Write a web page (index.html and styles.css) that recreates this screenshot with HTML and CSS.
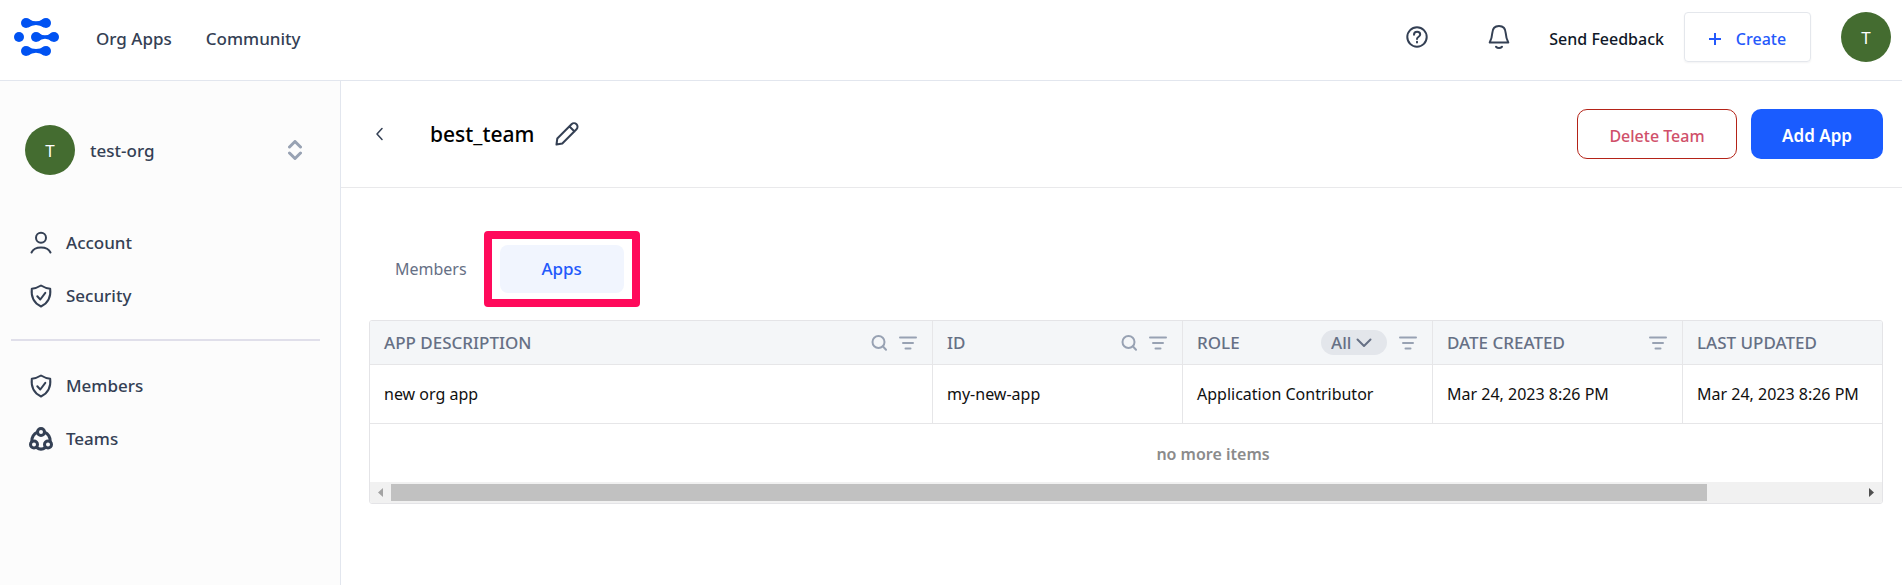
FILE: index.html
```html
<!DOCTYPE html>
<html lang="en">
<head>
<meta charset="utf-8">
<title>best_team - Apps</title>
<link rel="stylesheet" href="styles.css">
</head>
<body>
<svg class="defs" aria-hidden="true">
  <symbol id="shield" viewBox="0 0 24 24"><path d="M12 1.5c3 1.9 6 2.9 9.2 3.2.9 8.2-1.6 14.200-9.2 17.800C4.400 18.900 1.900 12.900 2.800 4.700 6 4.400 9 3.400 12 1.500z"/><path d="M8.300 12.300l3 3.200 5-6.700"/></symbol>
  <symbol id="search" viewBox="0 0 16 16"><circle cx="7.500" cy="7" r="6"/><path d="M11.800 11.300l3.200 3.400"/></symbol>
  <symbol id="filter" viewBox="0 0 18 14"><path d="M1 1.500h16M4 7h10M6.500 12.500h5"/></symbol>
</svg>
<div class="page">
  <header class="topbar">
    <a class="logo" href="#" aria-label="Home">
      <svg width="46" height="40" viewBox="0 0 46 40">
        <circle cx="12" cy="6" r="5"/><circle cx="32" cy="6" r="5"/><path d="M14 1.400Q22 7 30 1.400V10.600Q22 5.500 14 10.600z"/>
        <circle cx="5" cy="20" r="5"/><circle cx="22" cy="20" r="5"/><circle cx="40" cy="20" r="5"/><path d="M24 15.400Q31 21 38 15.400V24.600Q31 19 24 24.600z"/>
        <circle cx="12" cy="34" r="5"/><circle cx="32" cy="34" r="5"/><path d="M14 29.400Q22 34.500 30 29.400V38.600Q22 33 14 38.600z"/>
      </svg>
    </a>
    <nav class="topnav"><a href="#">Org Apps</a><a href="#">Community</a></nav>
    <div class="actions">
      <button class="icon-btn" aria-label="Help"><svg class="line" width="24" height="24" viewBox="0 0 24 24"><circle cx="12" cy="12" r="9.700"/><path d="M9 9.700c0-4 6.200-3.700 6.200-.3 0 2.300-3.200 2.300-3.200 4.600M12 16.800v.8"/></svg></button>
      <button class="icon-btn" aria-label="Notifications"><svg class="line" width="24" height="26" viewBox="0 0 24 26"><path d="M12 2C7.500 2 5.500 5 5.300 9 5 13 4.500 15 2.700 18.500h18.600C19.500 15 19 13 18.700 9 18.500 5 16.500 2 12 2z"/><path d="M9 22.800c1.600 1.700 4.400 1.700 6 0"/></svg></button>
      <a class="feedback" href="#">Send Feedback</a>
      <button class="btn create"><svg width="12" height="12" viewBox="0 0 12 12"><path d="M6 0v12M0 6h12"/></svg>Create</button>
      <button class="avatar" aria-label="Profile">T</button>
    </div>
  </header>
  <aside class="sidebar">
    <button class="org"><span class="avatar">T</span><span class="org-name">test-org</span>
      <svg class="updown" width="14" height="20" viewBox="0 0 14 20"><path d="M1.500 7L7 1.500 12.500 7M1.500 13L7 18.500 12.500 13"/></svg></button>
    <nav class="menu">
      <a href="#"><svg class="line" width="24" height="24" viewBox="0 0 24 24"><circle cx="12" cy="6.800" r="5"/><path d="M2.500 21.500c3-6.700 16-6.700 19 0"/></svg>Account</a>
      <a href="#"><svg class="line" width="24" height="24"><use href="#shield"/></svg>Security</a>
    </nav>
    <hr>
    <nav class="menu">
      <a href="#"><svg class="line" width="24" height="24"><use href="#shield"/></svg>Members</a>
      <a href="#"><svg class="line teams" width="24" height="24" viewBox="0 0 24 24"><circle cx="12" cy="5" r="3.500"/><circle cx="5" cy="17.500" r="3.500"/><circle cx="19" cy="17.500" r="3.500"/><path d="M8.500 5.200C4.800 7 2.800 10 2.800 14.300M15.500 5.200c3.700 1.800 5.700 4.800 5.700 9.100M7.500 20.500c2.800 2 6.200 2 9 0"/></svg>Teams</a>
    </nav>
  </aside>
  <main class="main">
    <div class="titlebar">
      <button class="back" aria-label="Back"><svg width="8" height="14" viewBox="0 0 8 14"><path d="M7 1.500L2 7l5 5.500"/></svg></button>
      <h1>best_team</h1>
      <button class="edit" aria-label="Edit name"><svg class="line" width="24" height="24" viewBox="0 0 24 24"><path d="M1.500 22.500l.8-6L16.500 2.300a3.500 3.500 0 0 1 5 5L7.300 21.500zM14.500 4.500l5 5"/></svg></button>
      <button class="btn delete">Delete Team</button>
      <button class="btn add">Add App</button>
    </div>
    <div class="content">
      <div class="tabs" role="tablist">
        <button class="tab" role="tab" aria-selected="false">Members</button>
        <div class="highlight"><button class="tab active" role="tab" aria-selected="true">Apps</button></div>
      </div>
      <div class="grid">
        <table>
          <colgroup><col><col class="mid"><col class="mid"><col class="mid"><col class="last"></colgroup>
          <thead><tr>
            <th><div class="head"><span>APP DESCRIPTION</span><svg class="tool" width="16" height="16"><use href="#search"/></svg><svg class="tool bars" width="18" height="14"><use href="#filter"/></svg></div></th>
            <th><div class="head"><span>ID</span><svg class="tool" width="16" height="16"><use href="#search"/></svg><svg class="tool bars" width="18" height="14"><use href="#filter"/></svg></div></th>
            <th><div class="head"><label for="role">ROLE</label><div class="pick"><select id="role"><option>All</option></select><svg width="16" height="10" viewBox="0 0 16 10"><path d="M1.500 1.500L8 8l6.500-6.500"/></svg></div><svg class="tool bars" width="18" height="14"><use href="#filter"/></svg></div></th>
            <th><div class="head"><span>DATE CREATED</span><svg class="tool bars" width="18" height="14"><use href="#filter"/></svg></div></th>
            <th><div class="head"><span>LAST UPDATED</span></div></th>
          </tr></thead>
          <tbody>
            <tr><td>new org app</td><td>my-new-app</td><td>Application Contributor</td><td>Mar 24, 2023 8:26 PM</td><td>Mar 24, 2023 8:26 PM</td></tr>
          </tbody>
        </table>
        <p class="end">no more items</p>
        <div class="scroll">
          <svg class="dim" width="21" height="17" viewBox="0 0 21 17"><path d="M13 4v9L8 8.500z"/></svg>
          <div class="track"><div class="thumb"></div></div>
          <svg width="21" height="17" viewBox="0 0 21 17"><path d="M8 4v9l5-4.500z"/></svg>
        </div>
      </div>
    </div>
  </main>
</div>
</body>
</html>
```

FILE: styles.css
```css
* { box-sizing: border-box; }
body { margin: 0; font: 500 16px/24px "Noto Sans", "Open Sans", sans-serif; color: #344054; background: #fff; }
button { font: inherit; color: inherit; background: none; border: 0; padding: 0; cursor: pointer; }
a { color: inherit; text-decoration: none; }
svg { display: block; flex: none; fill: none; stroke-linecap: round; stroke-linejoin: round; }
.defs { position: absolute; width: 0; height: 0; }
.line { stroke: #344054; stroke-width: 2; }
.teams { stroke-width: 3; }

.page { display: grid; grid-template: auto 1fr / 341px minmax(0, 1fr); min-height: 100vh; }
.topbar { grid-column: 1 / -1; display: flex; align-items: center; padding: 12px 11px 18px 14px; border-bottom: 1px solid #e2e6ee; }
.logo svg { fill: #0052f2; }
.topnav { display: flex; gap: 34px; margin-left: 36px; padding-top: 3px; font-size: 17px; }
.actions { display: flex; align-items: center; margin-left: auto; }
.icon-btn { width: 24px; margin-right: 58px; }
.icon-btn + .feedback { margin-left: -20px; }
.feedback { color: #101828; padding-top: 3px; margin-right: 20px; }
.avatar { display: grid; place-items: center; width: 50px; height: 50px; border-radius: 50%; background: #446c30; color: #fff; font-weight: 400; font-size: 17px; padding-top: 2px; flex: none; }
.btn { display: flex; align-items: center; justify-content: center; height: 50px; padding-top: 3px; border-radius: 10px; }
.create { width: 127px; gap: 15px; margin-right: 30px; border: 1px solid #e4e7ec; border-radius: 4px; color: #2459fb; box-shadow: 0 1px 2px rgba(16, 24, 40, .05); }
.create svg { stroke: #2459fb; stroke-width: 2; stroke-linecap: butt; }

.sidebar { background: #fcfcfc; border-right: 1px solid #e2e6ee; padding: 44px 20px 0 11px; font-size: 17px; }
.org { display: flex; align-items: center; width: 100%; padding: 0 18px 0 14px; }
.org-name { margin-left: 15px; padding-top: 2px; }
.updown { margin-left: auto; stroke: #98a2b3; stroke-width: 3; }
.menu { display: flex; flex-direction: column; gap: 29px; padding-left: 18px; }
.org + .menu { padding-top: 56px; }
.menu a { display: flex; align-items: center; gap: 13px; }
hr { height: 2px; margin: 31px 0 33px; border: 0; background: #e0dfea; }

.titlebar { display: flex; align-items: center; height: 107px; padding: 0 19px 0 34px; border-bottom: 1px solid #e9e9eb; }
.back svg { stroke: #344054; stroke-width: 1.5; }
h1 { margin: 0 21px 0 47px; font-size: 21px; line-height: 30px; font-weight: 500; color: #000; }
.delete { width: 160px; margin-left: auto; border: 1px solid #b42318; color: #d0506a; }
.add { width: 132px; margin-left: 14px; background: #1a5cff; color: #fff; font-weight: 600; font-size: 17px; }

.content { padding: 43px 19px 0 28px; }
.tabs { display: flex; align-items: center; gap: 17px; padding-left: 26px; }
.tab { font-weight: 400; color: #667085; }
.highlight { border: 8px solid #ff0a5b; border-radius: 4px; padding: 6px 8px; }
.active { width: 124px; height: 48px; border-radius: 8px; background: #f1f5fe; color: #2459fb; font-weight: 500; font-size: 17px; }

.grid { margin-top: 13px; border: 1px solid #e4e4e7; border-radius: 3px; overflow: hidden; }
table { width: 100%; border-collapse: separate; border-spacing: 0; table-layout: fixed; }
.mid { width: 250px; }
.last { width: 199px; }
th, td { text-align: left; border-right: 1px solid #e6e6e8; border-bottom: 1px solid #e6e6e8; padding: 0 0 0 14px; white-space: nowrap; }
th:last-child, td:last-child { border-right: 0; }
th { height: 44px; background: #f4f6f8; color: #667085; font-weight: 500; font-size: 17px; }
td { height: 59px; color: #101010; font-weight: 400; }
.head { display: flex; align-items: center; gap: 12px; padding-right: 15px; }
.head > :first-child { margin-right: auto; }
.tool { stroke: #98a2b3; stroke-width: 2; }
.pick { display: grid; align-items: center; }
.pick > * { grid-area: 1 / 1; }
.pick svg { justify-self: end; margin-right: 15px; stroke: #667085; stroke-width: 2; pointer-events: none; }
select { appearance: none; width: 66px; height: 25px; padding: 0 0 0 10px; border: 0; border-radius: 13px; background: #e3e6eb; color: #667085; font: inherit; }
.end { margin: 0; padding: 18px 120px 16px 294px; text-align: center; color: #8b8b8b; font-weight: 600; }
.scroll { display: flex; align-items: center; height: 21px; background: #f1f1f1; }
.scroll svg { fill: #a3a3a3; }
.scroll svg:last-child { fill: #505050; }
.track { flex: 1; }
.thumb { width: 89.5%; height: 17px; background: #c1c1c1; }
```
